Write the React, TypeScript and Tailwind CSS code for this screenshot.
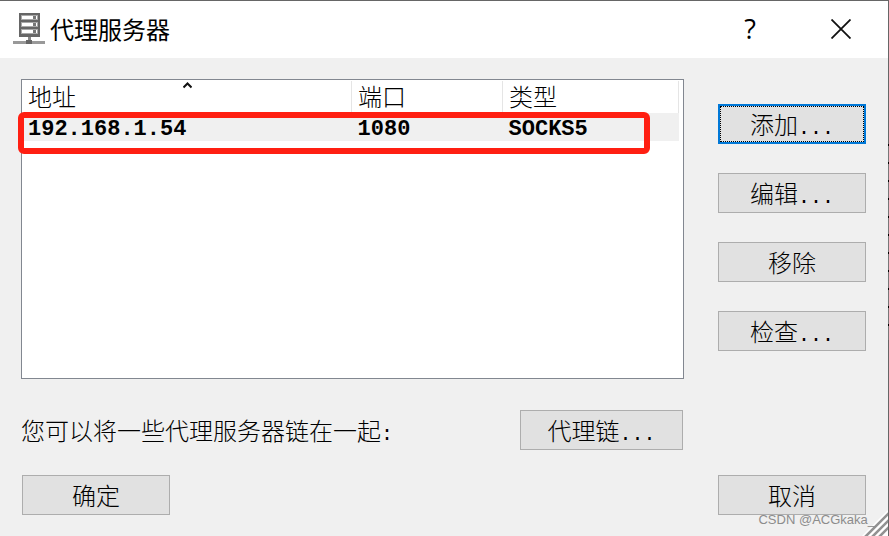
import type { ReactNode } from "react";

const PROXIES = [{ address: "192.168.1.54", port: "1080", type: "SOCKS5" }];

function Mono({ children }: { children: ReactNode }) {
  return (
    <span className="font-['Liberation_Mono',monospace] text-[20px] leading-none">{children}</span>
  );
}

function DialogButton({
  children,
  wide = false,
  focused = false,
}: {
  children: ReactNode;
  wide?: boolean;
  focused?: boolean;
}) {
  return (
    <button
      type="button"
      className={`flex h-10 shrink-0 items-center justify-center bg-[#e1e1e1] ${
        wide ? "w-[163px]" : "w-[148px]"
      } ${focused ? "border-2 border-[#0078d7]" : "border border-[#adadad]"}`}
    >
      <span
        className={`flex h-full w-full items-center justify-center ${
          focused ? "border border-dotted border-black" : ""
        }`}
      >
        <span>{children}</span>
      </span>
    </button>
  );
}

function ServerIcon() {
  return (
    <svg width="32" height="32" viewBox="0 0 32 32" aria-hidden="true">
      <path d="M6 0h21v24H6z" fill="#666" />
      <path d="M8 2h17v5H8zM8 9h17v5H8zM8 16h17v5H8z" fill="#a8a8a8" />
      <path d="M9 3h15v3H9zM9 10h15v3H9zM9 17h15v3H9z" fill="#fff" />
      <path d="M20 3h3v3h-3zM20 10h3v3h-3zM20 17h3v3h-3z" fill="#777" />
      <path d="M15 24h3v4h-3z" fill="#888" />
      <path d="M0 28h32v3H0z" fill="#999" />
      <path d="M13 27h6v4h-6z" fill="#666" />
    </svg>
  );
}

function TitleBar() {
  return (
    <header className="flex h-[57px] items-center bg-white pb-[2px] pl-[13px]">
      <ServerIcon />
      <h1 className="ml-[5px] flex-1 text-[24px] font-normal">代理服务器</h1>
      <button
        type="button"
        aria-label="帮助"
        className="flex h-full w-[88px] items-center justify-center font-['Open_Sans',sans-serif] text-[27px]"
      >
        ?
      </button>
      <button type="button" aria-label="关闭" className="flex h-full w-[94px] items-center justify-center">
        <svg width="20" height="20" viewBox="0 0 20 20" aria-hidden="true">
          <path d="M0.5 0.5L19.5 19.5M19.5 0.5L0.5 19.5" stroke="#111" strokeWidth="1.8" />
        </svg>
      </button>
    </header>
  );
}

function ProxyTable() {
  return (
    <div className="relative h-[300px] border border-[#828790] bg-white pt-px pr-1">
      <table className="w-full table-fixed border-collapse text-left">
        <colgroup>
          <col className="w-[50.2%]" />
          <col className="w-[23%]" />
          <col />
        </colgroup>
        <thead>
          <tr className="h-8">
            <th
              className="relative border-r border-[#e5e5e5] p-0 pb-[2px] pl-[6px] font-light"
              aria-sort="ascending"
            >
              地址
              <svg
                className="absolute top-px left-1/2 -translate-x-1"
                width="9"
                height="7"
                viewBox="0 0 9 7"
                aria-hidden="true"
              >
                <path d="M0.5 5.5L4.5 1.5L8.5 5.5" fill="none" stroke="#111" strokeWidth="2" />
              </svg>
            </th>
            <th className="border-r border-[#e5e5e5] p-0 pb-[2px] pl-[6px] font-light">端口</th>
            <th className="border-r border-[#e5e5e5] p-0 pb-[2px] pl-[6px] font-light">类型</th>
          </tr>
        </thead>
        <tbody className="font-['Liberation_Mono',monospace] text-[22px] leading-[22px] font-bold">
          {PROXIES.map((proxy) => (
            <tr key={proxy.address} className="h-7 bg-[#f0f0f0]">
              <td className="p-0 pt-[6px] pl-[6px]">{proxy.address}</td>
              <td className="p-0 pt-[6px] pl-[6px]">{proxy.port}</td>
              <td className="p-0 pt-[6px] pl-[6px]">{proxy.type}</td>
            </tr>
          ))}
        </tbody>
      </table>
      <div className="pointer-events-none absolute top-8 right-[33px] -left-1 h-[42px] rounded-md border-[6px] border-[#ff1f12]" />
    </div>
  );
}

function ResizeGrip() {
  return (
    <svg className="absolute right-0 bottom-0" width="26" height="26" viewBox="0 0 26 26" aria-hidden="true">
      <path d="M0 26L26 0V26Z" fill="#fff" />
      <path d="M3 27L27 3M10 27L27 10M17 27L27 17" stroke="#929292" strokeWidth="2.6" />
    </svg>
  );
}

export default function App() {
  return (
    <div className="relative flex min-h-screen flex-col border-t border-r border-[#666] bg-[#f0f0f0] font-['Noto_Sans_CJK_SC',sans-serif] text-[24px] leading-7 text-black">
      <TitleBar />
      <main className="grid grid-cols-[minmax(0,1fr)_148px] gap-x-[34px] pt-[21px] pr-[22px] pl-[21px] font-light">
        <ProxyTable />
        <div className="flex flex-col gap-[29px] pt-[25px]">
          <DialogButton focused>
            添加
            <Mono>...</Mono>
          </DialogButton>
          <DialogButton>
            编辑
            <Mono>...</Mono>
          </DialogButton>
          <DialogButton>移除</DialogButton>
          <DialogButton>
            检查
            <Mono>...</Mono>
          </DialogButton>
        </div>
        <div className="flex items-center justify-between pt-[31px] pr-px">
          <p>
            您可以将一些代理服务器链在一起
            <Mono>:</Mono>
          </p>
          <DialogButton wide>
            代理链
            <Mono>...</Mono>
          </DialogButton>
        </div>
      </main>
      <footer className="flex justify-between pt-[25px] pr-[22px] pb-5 pl-[22px] font-light">
        <DialogButton>确定</DialogButton>
        <DialogButton>取消</DialogButton>
      </footer>
      <ResizeGrip />
      <span className="pointer-events-none absolute right-[13px] bottom-2 font-['Liberation_Sans',sans-serif] text-[13px] leading-4 text-[#8c8c8c]">
        CSDN @ACGkaka_
      </span>
      <div className="absolute top-[143px] -right-px h-[196px] w-px bg-[repeating-linear-gradient(#000_0_2px,#777_2px_18px)]" />
    </div>
  );
}
